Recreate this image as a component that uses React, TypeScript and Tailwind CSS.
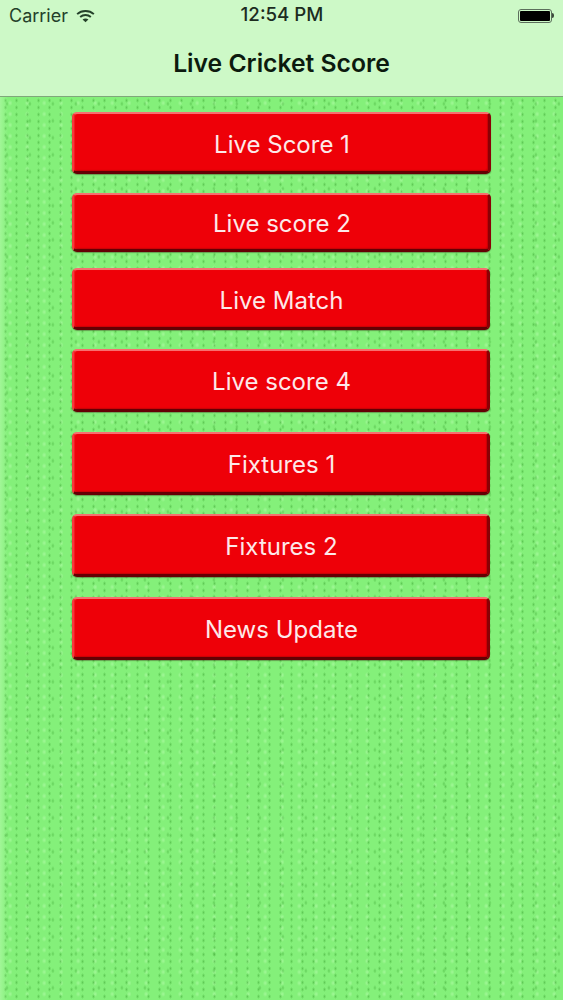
const menuItems = [
  { label: "Live Score 1", size: "h-[62px] w-[419px]", gap: "mt-[15px]" },
  { label: "Live score 2", size: "h-[59px] w-[419px]", gap: "mt-[19px]" },
  { label: "Live Match", size: "h-[62px] w-[418px]", gap: "mt-[16px]" },
  { label: "Live score 4", size: "h-[63px] w-[418px]", gap: "mt-[19px]" },
  { label: "Fixtures 1", size: "h-[63px] w-[418px]", gap: "mt-[20px]" },
  { label: "Fixtures 2", size: "h-[63px] w-[418px]", gap: "mt-[19px]" },
  { label: "News Update", size: "h-[63px] w-[418px]", gap: "mt-[20px]" },
];

function WifiIcon() {
  return (
    <svg width="19" height="14" viewBox="0 0 20 14" fill="none" stroke="#24402a" strokeWidth="2">
      <path d="M1.2 5 C6 0.6 14 0.6 18.8 5" />
      <path d="M4.4 8 C7.6 5.2 12.4 5.2 15.6 8" />
      <path d="M10 13.6 L6.9 10.6 C8.6 9.3 11.4 9.3 13.1 10.6 Z" fill="#24402a" stroke="none" />
    </svg>
  );
}

function Battery() {
  return (
    <div className="flex items-center">
      <div className="w-[34px] h-[14px] rounded-[3px] border border-[#5c6f5c] p-[1px]">
        <div className="w-[30px] h-full rounded-[1px] bg-black" />
      </div>
      <div className="w-[2px] h-[5px] rounded-r-sm bg-[#3c4a3c]" />
    </div>
  );
}

function MenuButton({ label, size, gap }: { label: string; size: string; gap: string }) {
  return (
    <button
      type="button"
      className={`${size} ${gap} pt-[4px] pl-[2px] rounded-[5px] bg-[#ee0008] border-t-[2px] border-t-[#f76f6f] border-l-[2px] border-l-[#f8383c] border-r-[3px] border-r-[#8a0005] border-b-[3px] border-b-[#640004] text-[24px] text-[#fde9e9] shadow-[0_1px_1px_rgba(60,40,20,0.4),inset_1px_0_1px_rgba(255,80,80,0.35),inset_-1px_-1px_1px_rgba(130,0,0,0.35)]`}
    >
      {label}
    </button>
  );
}

export default function App() {
  return (
    <div className="w-[563px] h-[1000px] overflow-hidden flex flex-col font-['Inter',sans-serif] bg-[#84f07a]">
      {/* Nav bar with status row */}
      <header className="h-[97px] shrink-0 flex flex-col bg-[#cdf9c7] border-b border-b-[#7fa87a]">
        <div className="h-[31px] flex items-center justify-between px-[9px] text-[#24402a]">
          <div className="flex items-center gap-[8px] w-[120px] text-[18px]">
            Carrier
            <WifiIcon />
          </div>
          <span className="ml-[1px] text-[18.7px] font-medium text-[#1c2c1f]">12:54 PM</span>
          <div className="w-[120px] flex justify-end">
            <Battery />
          </div>
        </div>
        <h1 className="mt-[13px] text-center text-[24.7px] font-semibold leading-[38px] text-[#0c1a0e]">
          Live Cricket Score
        </h1>
      </header>

      {/* Textured canvas */}
      <main className="flex-1 flex flex-col pl-[72px] bg-[#84f07a] bg-[linear-gradient(90deg,rgba(205,255,195,0.4),rgba(205,255,195,0)_8px),radial-gradient(ellipse_1.6px_2.6px_at_50%_50%,rgba(70,175,60,0.6),transparent),radial-gradient(ellipse_1.8px_2.8px_at_30%_40%,rgba(70,175,60,0.5),transparent),radial-gradient(ellipse_2.4px_3px_at_60%_55%,rgba(190,255,180,0.5),transparent)] bg-[size:100%_100%,11px_7px,23px_17px,17px_11px]">
        {menuItems.map((item) => (
          <MenuButton key={item.label} {...item} />
        ))}
      </main>
    </div>
  );
}
